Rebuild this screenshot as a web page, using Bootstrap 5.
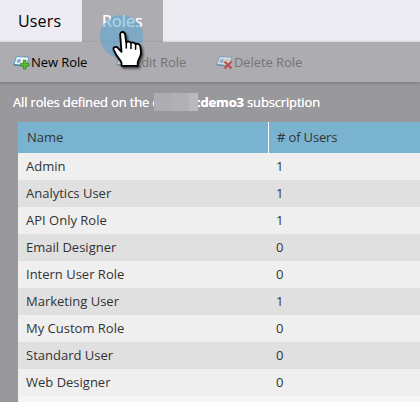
<!DOCTYPE html>
<html lang="en">
<head>
<meta charset="utf-8">
<meta name="viewport" content="width=device-width, initial-scale=1">
<title>Roles</title>
<link href="https://cdn.jsdelivr.net/npm/bootstrap@5.3.0/dist/css/bootstrap.min.css" rel="stylesheet">
<style>
body{font-family:"Open Sans","Noto Sans",sans-serif;font-size:13px;line-height:20px;background:#fff;color:#333}
.app{height:402px;background:#99989c}
.tabs{height:42px;background:#ecebf1}
.tabs .nav-link{font-size:16px;line-height:20px;color:#000;width:82px;padding:11px 0 11px 18px;border-radius:0;letter-spacing:.15px}
.tabs .nav-link.active{width:81px;padding-left:20px;background:#adacb0;color:#fff;text-shadow:0 0 .5px #fff}
.toolbar{height:40px;background:#adacb0;padding-left:13px;box-shadow:0 1px 3px #77767b}
.tool{border:0;background:none;padding:0;font-size:13px;line-height:20px;color:#000;border-radius:0;letter-spacing:-.08px}
.tool:disabled{color:#747377;opacity:1;border:0}
.tool:disabled svg{opacity:.65}
.t-new{width:103px}.t-edit{width:100px}
.intro{height:40px;padding:10px 0 0 13px;color:#fff;white-space:nowrap;text-shadow:0 0 .5px #fff;letter-spacing:-.16px}
.redact{width:44px;height:18px;margin:1px 0 0 -5px;background:linear-gradient(90deg,#adacb1 0 18px,#b1b0b4 18px 35px,#bababa 35px);z-index:1}
.intro .rest{margin-left:-1px}
.grid{margin-left:18px;height:280px;background:#f5f5f5}
.grid-head{height:31px;background:#7ab3cf;color:#333}
.grid-head>div{padding-bottom:1px;letter-spacing:-.15px}
.grid-line{height:27px;padding-bottom:2px;background:#efefef}
.grid-line:nth-child(odd){background:#e0e0e0}
.c-name{width:250px;padding-left:8px}
.grid-head .c-name{padding-left:9px;letter-spacing:0}
.c-num{padding-left:8px}
.grid-head .c-num{border-left:1px solid #fff}
.halo{left:100px;top:15px;width:43px;height:43px;background:rgba(80,165,215,.5)}
.hand{left:106px;top:26px}
</style>
</head>
<body>
<main class="app position-relative overflow-hidden">
  <nav class="nav tabs flex-nowrap">
    <a class="nav-link" href="#">Users</a>
    <a class="nav-link active" href="#">Roles</a>
  </nav>
  <div class="toolbar d-flex align-items-center position-relative">
    <button class="btn tool t-new d-flex align-items-center"><svg width="18" height="16" viewBox="0 0 18 16"><use href="#card"/><path d="M10.500 6.500h2.500v3h3V12h-3v3h-2.500v-3h-3V9.500h3z" fill="#55c035" stroke="#2c8a20" stroke-width=".8"/></svg>New&nbsp;Role</button>
    <button class="btn tool t-edit d-flex align-items-center" disabled><svg width="18" height="16" viewBox="0 0 18 16"><use href="#card"/><path d="M7 14l1-3 6-5 2 2-6 5z" fill="#e5a54a" stroke="#8a5a28" stroke-width=".7"/></svg>Edit&nbsp;Role</button>
    <button class="btn tool d-flex align-items-center" disabled><svg width="18" height="16" viewBox="0 0 18 16"><use href="#card"/><path d="M8.500 7.500l7 7M15.500 7.500l-7 7" stroke="#cf1c1c" stroke-width="2.200"/></svg>Delete&nbsp;Role</button>
  </div>
  <div class="intro d-flex"><span>All roles defined on the <b>c</b></span><span class="redact"></span><span class="rest"><b>:demo3</b> subscription</span></div>
  <section class="grid">
    <div class="grid-head d-flex align-items-stretch"><div class="c-name d-flex align-items-center">Name</div><div class="c-num d-flex align-items-center"># of Users</div></div>
    <div class="grid-line d-flex align-items-center"><div class="c-name">Admin</div><div class="c-num">1</div></div>
    <div class="grid-line d-flex align-items-center"><div class="c-name">Analytics User</div><div class="c-num">1</div></div>
    <div class="grid-line d-flex align-items-center"><div class="c-name">API Only Role</div><div class="c-num">1</div></div>
    <div class="grid-line d-flex align-items-center"><div class="c-name">Email Designer</div><div class="c-num">0</div></div>
    <div class="grid-line d-flex align-items-center"><div class="c-name">Intern User Role</div><div class="c-num">0</div></div>
    <div class="grid-line d-flex align-items-center"><div class="c-name">Marketing User</div><div class="c-num">1</div></div>
    <div class="grid-line d-flex align-items-center"><div class="c-name">My Custom Role</div><div class="c-num">0</div></div>
    <div class="grid-line d-flex align-items-center"><div class="c-name">Standard User</div><div class="c-num">0</div></div>
    <div class="grid-line d-flex align-items-center"><div class="c-name">Web Designer</div><div class="c-num">0</div></div>
  </section>
  <div class="halo rounded-circle position-absolute"></div>
  <svg class="hand position-absolute" width="44" height="48" viewBox="0 0 44 48">
    <defs>
      <filter id="sh" x="-20%" y="-20%" width="150%" height="150%"><feDropShadow dx="1.500" dy="2" stdDeviation="1.300" flood-opacity=".6"/></filter>
      <g id="card"><path d="M3.500 2.500L16 3.200 13.500 12 .8 10.600z" fill="#e6f4fc" stroke="#5b95bf" stroke-width=".9"/><path d="M1 10.800l12.300 1.300" stroke="#356f9c" stroke-width="1.100"/><path d="M4.500 5.200l3.500.2-.8 3.400-3.500-.3z" fill="#75aed5"/><path d="M9.500 6l4 .3M9 8.200l3 .3" stroke="#d8b654" stroke-width="1"/></g>
    </defs>
    <path filter="url(#sh)" d="M14.200 8.800c-.2-3.600 4.600-3.900 5 0l1 8c.8-1.900 4.300-1.600 4.700.4 1.200-1.400 4.200-.8 4.600 1.100 1.900-1.300 4.400-.2 4.800 2.300l.8 5.400c.3 4.500-2.600 6-3.400 10.500v3.300H15.500v-3c-.8-3.300-4-5-5.600-8.600L7.600 23.600c-.9-2.700 2.400-3.600 4.200-1.700l3.700 3.900z" fill="#fff" stroke="#000" stroke-width="1.800" stroke-linejoin="round"/>
    <path d="M20.300 17.500v4.500M25 18v4.500M29.600 19.300v4" stroke="#000" stroke-width="1.500" stroke-linecap="round"/>
  </svg>
</main>
<script src="https://cdn.jsdelivr.net/npm/bootstrap@5.3.0/dist/js/bootstrap.bundle.min.js"></script>
</body>
</html>
